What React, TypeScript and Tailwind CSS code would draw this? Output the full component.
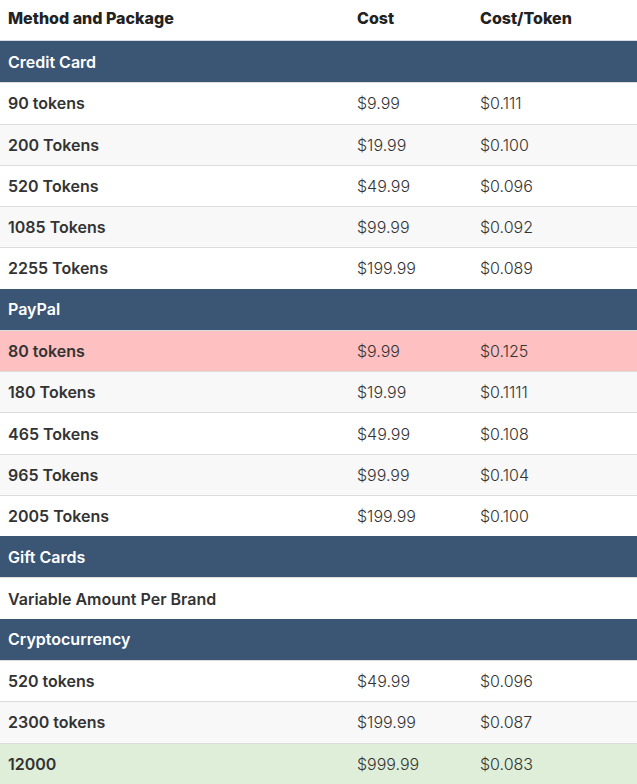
type Row =
  | { kind: 'section'; label: string }
  | { kind: 'item'; label: string; cost?: string; perToken?: string; tone?: 'pink' | 'green' }

const rows: Row[] = [
  { kind: 'section', label: 'Credit Card' },
  { kind: 'item', label: '90 tokens', cost: '$9.99', perToken: '$0.111' },
  { kind: 'item', label: '200 Tokens', cost: '$19.99', perToken: '$0.100' },
  { kind: 'item', label: '520 Tokens', cost: '$49.99', perToken: '$0.096' },
  { kind: 'item', label: '1085 Tokens', cost: '$99.99', perToken: '$0.092' },
  { kind: 'item', label: '2255 Tokens', cost: '$199.99', perToken: '$0.089' },
  { kind: 'section', label: 'PayPal' },
  { kind: 'item', label: '80 tokens', cost: '$9.99', perToken: '$0.125', tone: 'pink' },
  { kind: 'item', label: '180 Tokens', cost: '$19.99', perToken: '$0.1111' },
  { kind: 'item', label: '465 Tokens', cost: '$49.99', perToken: '$0.108' },
  { kind: 'item', label: '965 Tokens', cost: '$99.99', perToken: '$0.104' },
  { kind: 'item', label: '2005 Tokens', cost: '$199.99', perToken: '$0.100' },
  { kind: 'section', label: 'Gift Cards' },
  { kind: 'item', label: 'Variable Amount Per Brand' },
  { kind: 'section', label: 'Cryptocurrency' },
  { kind: 'item', label: '520 tokens', cost: '$49.99', perToken: '$0.096' },
  { kind: 'item', label: '2300 tokens', cost: '$199.99', perToken: '$0.087' },
  { kind: 'item', label: '12000', cost: '$999.99', perToken: '$0.083', tone: 'green' },
]

export default function App() {
  let stripe = 0

  const renderRow = (row: Row, i: number) => {
    if (row.kind === 'section') {
      stripe = 0
      return (
        <div key={i} className="flex h-[41.28px] items-center bg-[#3b5675] pl-2 text-[16px] font-semibold text-white">
          {row.label}
        </div>
      )
    }
    const odd = stripe % 2 === 1
    stripe++
    const bg = row.tone === 'pink' ? 'bg-[#fec0c0]' : row.tone === 'green' ? 'bg-[#dfeed9]' : odd ? 'bg-[#f8f8f8]' : 'bg-white'
    return (
      <div key={i} className={`flex h-[41.28px] items-center border-t border-[#dcdcdc] pl-2 text-[16px] text-[#333] ${bg}`}>
        <span className="w-[349px] font-semibold">{row.label}</span>
        <span className="w-[123px] font-light">{row.cost}</span>
        <span className="font-light">{row.perToken}</span>
      </div>
    )
  }

  return (
    <div className="min-h-screen bg-white font-['Inter',sans-serif]">
      <div className="flex h-[40px] items-center pb-1 pl-2 text-[16px] font-extrabold text-[#222]">
        <span className="w-[349px]">Method and Package</span>
        <span className="w-[123px]">Cost</span>
        <span>Cost/Token</span>
      </div>
      <div className="h-[1px] bg-[#d5dbe2]" />
      {rows.map(renderRow)}
    </div>
  )
}
